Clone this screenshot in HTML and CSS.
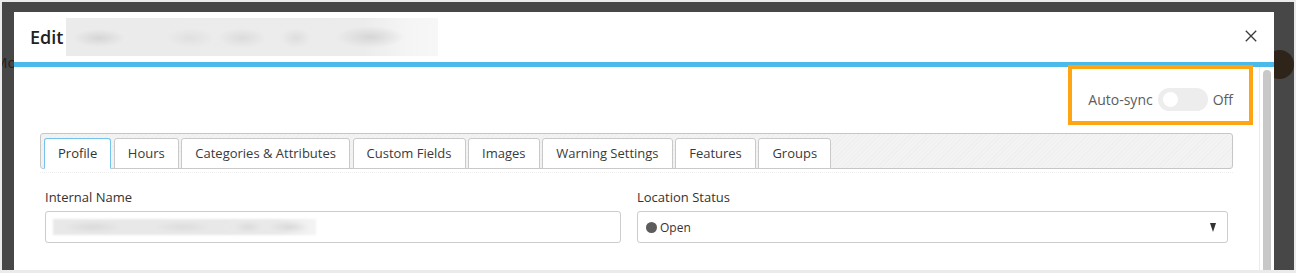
FILE: index.html
```html
<!DOCTYPE html>
<html>
<head>
<meta charset="utf-8">
<link rel="stylesheet" href="styles.css">
</head>
<body>
<div class="backdrop">
  <div class="bg-text">Mo</div>
  <div class="bg-dot"></div>
  <div class="modal">
    <div class="modal-header">
      <span class="title">Edit</span>
      <div class="title-blur"></div>
      <button class="close" aria-label="Close">
        <svg width="12" height="12" viewBox="0 0 12 12"><path d="M0.8 0.8 L11.2 11.2 M11.2 0.8 L0.8 11.2" stroke="#3a3a3a" stroke-width="1.3" fill="none"/></svg>
      </button>
    </div>
    <div class="modal-body">
      <div class="content">
        <div class="sync-row">
          <span class="sync-label">Auto-sync</span>
          <span class="toggle"><span class="knob"></span></span>
          <span class="sync-state">Off</span>
        </div>
        <div class="tabs">
          <div class="tab active">Profile</div>
          <div class="tab">Hours</div>
          <div class="tab">Categories &amp; Attributes</div>
          <div class="tab">Custom Fields</div>
          <div class="tab">Images</div>
          <div class="tab">Warning Settings</div>
          <div class="tab">Features</div>
          <div class="tab">Groups</div>
        </div>
        <div class="tabs-shadow"></div>
        <div class="form-row">
          <div class="field">
            <label class="label">Internal Name</label>
            <div class="input"><div class="input-blur"></div></div>
          </div>
          <div class="field">
            <label class="label">Location Status</label>
            <div class="select">
              <span class="status-dot"></span>
              <span class="select-text">Open</span>
              <span class="caret"></span>
            </div>
          </div>
        </div>
      </div>
      <div class="scrollbar"><div class="thumb"></div></div>
    </div>
    <div class="highlight"></div>
  </div>
</div>
</body>
</html>
```

FILE: styles.css
```css
html, body {
  margin: 0;
  padding: 0;
}
body {
  background: #ebebeb;
  width: 1296px;
  height: 273px;
  overflow: hidden;
  padding: 2px 2px 0 2px;
  box-sizing: border-box;
  font-family: "Open Sans", "Liberation Sans", sans-serif;
}
.backdrop {
  position: relative;
  overflow: hidden;
  height: 268px;
  background: #474747;
  padding: 10px 20px 0 12px;
  box-sizing: border-box;
}
.bg-text {
  position: absolute;
  left: -8px;
  top: 50px;
  font-size: 15px;
  color: #26211c;
  z-index: 0;
}
.bg-dot {
  position: absolute;
  left: 1263px;
  top: 48px;
  width: 29px;
  height: 29px;
  border-radius: 50%;
  background: #2f241a;
  z-index: 0;
}
.modal {
  position: relative;
  z-index: 1;
  width: 1260px;
  height: 320px;
  background: #fff;
}
.modal-header {
  display: flex;
  align-items: center;
  height: 55px;
  box-sizing: border-box;
  padding: 0 17px 0 16px;
  border-bottom: 5px solid #4bb9e9;
}
.title {
  font-size: 18px;
  font-weight: 600;
  color: #222;
  line-height: 24px;
}
.title-blur {
  width: 372px;
  height: 38px;
  margin-left: 3px;
  background:
    radial-gradient(ellipse 26px 9px at 33px 20px, #d6d6d6, rgba(230,230,230,0)),
    radial-gradient(ellipse 24px 10px at 124px 20px, #e0e0e0, rgba(230,230,230,0)),
    radial-gradient(ellipse 24px 10px at 176px 20px, #dcdcdc, rgba(230,230,230,0)),
    radial-gradient(ellipse 15px 10px at 230px 20px, #dedede, rgba(230,230,230,0)),
    radial-gradient(ellipse 34px 11px at 304px 19px, #d6d6d6, rgba(230,230,230,0)),
    linear-gradient(90deg, #ebebeb 0%, #ececec 80%, #f5f5f5 92%, #f7f7f7 100%);
}
.close {
  margin-left: auto;
  border: 0;
  background: none;
  padding: 0;
  width: 12px;
  height: 12px;
  display: flex;
  margin-top: -2px;
}
.modal-body {
  display: flex;
  height: 260px;
}
.content {
  flex: 1;
  padding: 0 26px;
}
.sync-row {
  display: flex;
  justify-content: flex-end;
  align-items: center;
  gap: 5px;
  margin-top: 21px;
  height: 23px;
  font-size: 14px;
  color: #5c5c5c;
}
.toggle {
  width: 50px;
  height: 23px;
  border-radius: 12px;
  background: #ededed;
  display: flex;
  align-items: center;
  box-sizing: border-box;
  padding-left: 5px;
}
.knob {
  width: 15px;
  height: 15px;
  border-radius: 50%;
  background: #fff;
}
.tabs {
  margin-top: 22px;
  height: 36px;
  box-sizing: border-box;
  border: 1px solid #c6c6c6;
  border-radius: 3px;
  padding: 4px 3px 0 3px;
  display: flex;
  align-items: flex-end;
  gap: 2.6px;
  background: repeating-linear-gradient(-45deg, #f3f3f3 0 2px, #efefef 2px 3px);
}
.tab {
  height: 31px;
  box-sizing: border-box;
  margin-bottom: -1px;
  border: 1px solid #c9c9c9;
  border-radius: 3px 3px 0 0;
  background: #fff;
  padding: 0 13px;
  font-size: 13px;
  line-height: 29px;
  color: #3a3a3a;
  white-space: nowrap;
}
.tab.active {
  border-color: #73c3ec;
  border-bottom-color: #fff;
  color: #333;
}
.tabs-shadow {
  margin-top: 3px;
  height: 1px;
  border-top: 1px dotted #eeeeee;
}
.form-row {
  display: grid;
  grid-template-columns: 576px 591px;
  column-gap: 16px;
  padding-left: 5px;
  margin-top: 14px;
}
.field {
  display: flex;
  flex-direction: column;
}
.label {
  font-size: 13px;
  line-height: 18px;
  color: #333;
  margin-bottom: 5px;
}
.input, .select {
  height: 32px;
  box-sizing: border-box;
  border: 1px solid #cccccc;
  border-radius: 3px;
  background: #fff;
}
.input-blur {
  width: 263px;
  height: 16px;
  margin: 7px 0 0 7px;
  background:
    radial-gradient(ellipse 30px 6px at 40px 8px, #dadada, rgba(232,232,232,0)),
    radial-gradient(ellipse 30px 6px at 130px 8px, #dddddd, rgba(232,232,232,0)),
    radial-gradient(ellipse 14px 6px at 195px 8px, #dbdbdb, rgba(232,232,232,0)),
    radial-gradient(ellipse 20px 6px at 236px 8px, #d9d9d9, rgba(232,232,232,0)),
    linear-gradient(90deg, #e8e8e8 0%, #e9e9e9 85%, #f4f4f4 100%);
  filter: blur(1px);
}
.select {
  display: flex;
  align-items: center;
  padding: 0 11px 0 8px;
}
.status-dot {
  width: 11px;
  height: 11px;
  border-radius: 50%;
  background: #5c5c5c;
  margin-right: 3px;
}
.select-text {
  font-size: 12px;
  color: #333;
}
.caret {
  margin-left: auto;
  width: 0;
  height: 0;
  border-left: 3.5px solid transparent;
  border-right: 3.5px solid transparent;
  border-top: 9px solid #333;
}
.scrollbar {
  width: 15px;
  box-sizing: border-box;
  border-left: 1px solid #ececec;
  padding: 3px 3px 0 3px;
}
.thumb {
  height: 100%;
  background: #c8c8c8;
  border-radius: 4px 4px 0 0;
}
.highlight {
  position: absolute;
  left: 1054px;
  top: 53px;
  width: 185px;
  height: 60px;
  box-sizing: border-box;
  border: 4px solid #ffa514;
  pointer-events: none;
}
```
